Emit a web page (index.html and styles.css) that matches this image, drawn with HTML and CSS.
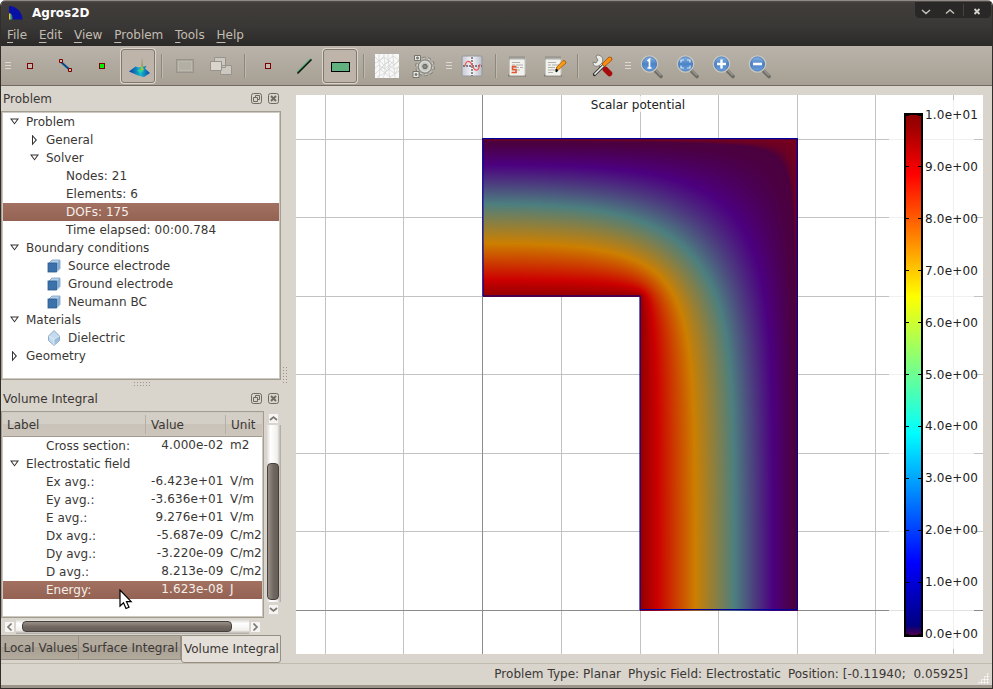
FILE: index.html
```html
<!DOCTYPE html>
<html lang="en">
<head>
<meta charset="utf-8">
<title>Agros2D</title>
<link rel="stylesheet" href="styles.css">
</head>
<body>
<svg class="defs" aria-hidden="true">
  <defs>
    <linearGradient id="lens" x1="0" y1="0" x2="0" y2="1"><stop offset="0" stop-color="#8fb8e4"/><stop offset=".5" stop-color="#4c83c6"/><stop offset="1" stop-color="#6fa3dc"/></linearGradient>
    <linearGradient id="surf" x1="0" y1="0" x2="1" y2="0"><stop offset="0" stop-color="#0a3aa8"/><stop offset=".55" stop-color="#14b8c8"/><stop offset="1" stop-color="#0848b0"/></linearGradient>
    <linearGradient id="sheet" x1="0" y1="0" x2="1" y2="0"><stop offset="0" stop-color="#c6c8d4"/><stop offset=".5" stop-color="#f4f4f8"/><stop offset="1" stop-color="#b9bcca"/></linearGradient>
    <linearGradient id="jet" x1="0" y1="0" x2="0" y2="1"><stop offset="0" stop-color="#900000"/><stop offset=".02" stop-color="#9b0000"/><stop offset=".115" stop-color="#ff0000"/><stop offset=".35" stop-color="#ffff00"/><stop offset=".61" stop-color="#00ffff"/><stop offset=".86" stop-color="#0000ff"/><stop offset=".98" stop-color="#000080"/><stop offset="1" stop-color="#550044"/></linearGradient>
    <g id="zoomlens">
      <path d="M21 22.500l6 6" stroke="#6d6b66" stroke-width="3.600" stroke-linecap="round"/>
      <path d="M22 22.500l5 5" stroke="#9b9993" stroke-width="1.200"/>
      <circle cx="15.500" cy="16" r="8" fill="url(#lens)" stroke="#c9c9c2" stroke-width="1.600"/>
      <circle cx="15.500" cy="16" r="7.100" fill="none" stroke="#3f74b4" stroke-width=".7"/>
    </g>
    <g id="cube"><path d="M1.500 4.500L5 1h8v8.500L9.500 13z" fill="#b5cfe8" stroke="#6e93bb" stroke-width=".7"/><path d="M10 4l3-3v8l-3 3z" fill="#86aed3"/><rect x="1" y="4" width="8.500" height="9" fill="#3d71ab" stroke="#2b5b90" stroke-width=".8"/></g>
    <g id="pad"><path d="M8 27.500h18" stroke="#7d7972" stroke-width="2"/><rect x="9.500" y="9.500" width="15.500" height="18" rx=".8" fill="#f1f1ee" stroke="#c5c4be"/><path d="M9.500 10h15.500" stroke="#6e6d68" stroke-width="3" stroke-dasharray="1 1"/><path d="M12 14.500h8M12 17h3m1 0h7M12 19.500h7m1 0h3M12 22h8M12 24.500h5" stroke="#b1b0ab"/></g>
  </defs>
</svg>
<div class="window">
  <header class="titlebar">
    <svg class="logo" width="16" height="16" viewBox="0 0 16 16"><path d="M1 1a14 14 0 0 1 13.500 13.500H5A6 6 0 0 0 1 8z" fill="#0711a5"/><path d="M1 7.500a7 7 0 0 1 3 7H1z" fill="#18489c"/><path d="M1 8.500h1.500v6H1z" fill="#f5c61c"/><path d="M2.500 9.500h1v5h-1z" fill="#37b8b0"/></svg>
    <h1>Agros2D</h1>
    <svg class="wmbuttons" width="76" height="18" viewBox="0 0 76 18"><path d="M0 0h76v11q0 5-5 5H5q-5 0-5-5z" fill="#2a2826"/><path d="M48.500 2v12" stroke="#474440"/><path d="M7 8l4 3.500L15 8M31 11.500L35 8l4 3.500" fill="none" stroke="#c4c0b8" stroke-width="1.500"/><path d="M59.500 7l5 5m0-5l-5 5" stroke="#d4d0c8" stroke-width="1.900"/></svg>
  </header>
  <nav class="menubar"><span><u>F</u>ile</span><span><u>E</u>dit</span><span><u>V</u>iew</span><span><u>P</u>roblem</span><span><u>T</u>ools</span><span><u>H</u>elp</span></nav>
  <div class="toolbar">
    <i class="grip first"></i>
    <svg class="tool" viewBox="0 0 36 36"><rect x="15.500" y="15.500" width="5" height="5" fill="#c9b8b0" stroke="#7d0000"/></svg>
    <svg class="tool" viewBox="0 0 36 36"><path d="M13 14l9 8" stroke="#004a8c" stroke-width="2"/><path d="M11.500 11.500h3v3h-3zM20.500 20.500h3v3h-3z" fill="#c9b8b0" stroke="#7d0000"/></svg>
    <svg class="tool" viewBox="0 0 36 36"><rect x="15.500" y="15.500" width="5" height="5" fill="#00f000" stroke="#7d0000"/></svg>
    <span class="tool pressed"><svg width="34" height="34" viewBox="0 0 34 34"><path d="M8 22.500l6.500-5 3 1 8-1.500-1.500 2.500 5 4.500-6 4-6-1.500z" fill="url(#surf)"/><path d="M16 21l4-1 3 2-4 2z" fill="#30cf9c"/><path d="M20.500 20l.5-12 .8 12z" fill="#8b7a30"/><path d="M19 21l2-5 2 5z" fill="#a6c03c"/></svg></span>
    <i class="sep"></i>
    <svg class="tool" viewBox="0 0 36 36"><rect x="9.500" y="11.500" width="17" height="13" fill="#aba69b" stroke="#98948d"/><rect x="11.500" y="13.500" width="13" height="9" fill="#b4afa5" stroke="#bdb9b2"/></svg>
    <svg class="tool" viewBox="0 0 36 36"><g fill="#cdc8bf" stroke="#97938d"><path d="M11.500 9.500h11v10h-11zM17.500 17.500h11v9h-11z"/><path d="M7.500 13.500h11v9h-11z" fill="#d9d5cc"/></g></svg>
    <i class="sep"></i>
    <svg class="tool" viewBox="0 0 36 36"><rect x="15.500" y="15.500" width="5" height="5" fill="#c9b8b0" stroke="#7d0000"/></svg>
    <svg class="tool" viewBox="0 0 36 36"><path d="M11.500 24.500L25 11" stroke="#4aa873" stroke-width="2"/><path d="M11.500 25.500L25.500 11.500" stroke="#091008" stroke-width="1.500"/></svg>
    <span class="tool pressed"><svg width="34" height="34" viewBox="0 0 34 34"><rect x="8.500" y="13.500" width="18" height="9" fill="#60b080" stroke="#000"/></svg></span>
    <i class="sep"></i>
    <svg class="tool" viewBox="0 0 36 36"><rect x="6" y="6" width="24" height="24" fill="#f8f8f8"/><path d="M6 9l4 4 5-4 4 3 5-4 6 4M6 15l5-2 4 4 6-4 4 4 5-4M6 20l4-3 6 4 4-4 5 4 5-2M6 26l5-5 5 4 4-4 6 5 4-3M10 6v7l1 8-1 9M15 6v3l1 8v8l-2 5M19 6v6l1 5v8l1 5M24 6v3l1 7v5l1 9M10 13l5-4M11 21l5-5 5-4M11 22l5-4M16 25l5-8 4-5M20 21l5-4 5-5M26 26l4-8M8 29l8-4 5 4 5-3" fill="none" stroke="#d4d4d4" stroke-width=".8"/></svg>
    <svg class="tool" viewBox="0 0 36 36"><g fill="none" stroke="#75756f"><circle cx="20" cy="18.500" r="8.200" stroke-width="3.200" stroke-dasharray="2.900 2.250"/><circle cx="20" cy="18.500" r="8" stroke="#c9c9c5" stroke-width="1.800" stroke-dasharray="2.700 2.320"/><circle cx="20" cy="18.500" r="6.500" fill="#c2c2be" stroke-width=".7"/><circle cx="20" cy="18.500" r="5" stroke="#d9d9d5" stroke-width="1.500"/><circle cx="20" cy="18.500" r="2.200" fill="#898984" stroke="#666661"/><path d="M9.500 7.500h6v5h-6zM8 23.500h6v6H8z" fill="#e8e8e3"/><circle cx="12.500" cy="10" r="1" fill="#777"/><circle cx="11" cy="26.500" r="1" fill="#777"/></g></svg>
    <i class="grip"></i>
    <svg class="tool" viewBox="0 0 36 36"><rect x="8" y="8" width="20" height="20" rx="1" fill="url(#sheet)" stroke="#97969a"/><path d="M9 18h19M18 9v19" stroke="#5f5e63" stroke-width="1.400" stroke-dasharray="2 1"/><path d="M11 18c1-6 5-6 7-1s6 9 8-1" fill="none" stroke="#ee5656" stroke-width="1.200"/></svg>
    <i class="sep tight"></i>
    <svg class="tool" viewBox="0 0 36 36"><use href="#pad"/><path d="M16.500 18.500h-4v3h3.500v3h-4.500" fill="none" stroke="#e5562f" stroke-width="1.600"/></svg>
    <svg class="tool" viewBox="0 0 36 36"><use href="#pad"/><path d="M22.300 22l-2.300-2 7-7.500q3 0 3 2.500z" fill="#f79c18" stroke="#a75400" stroke-width=".8"/><path d="M20 24l2-1.500-2-1.500z" fill="#111" stroke="#111"/></svg>
    <i class="sep wide"></i>
    <svg class="tool" viewBox="0 0 36 36"><path d="M16 16.500l5 5" stroke="#66645f" stroke-width="4"/><path d="M15 15l6 6" stroke="#e4e4e0" stroke-width="2.500"/><path d="M21.500 21.500l4 4" stroke="#a80d0d" stroke-width="5.500" stroke-linecap="round"/><path d="M12 9l2 3-2 3-3-1c0 5 4 5 7 3l2-2c2-4 0-8-5-8z" fill="#ecece8" stroke="#70706b" stroke-width=".8"/><path d="M10.500 26.500L20 17" stroke="#333" stroke-width="3.200" stroke-linecap="round"/><path d="M10.500 26.500L20 17" stroke="#f4f4f4" stroke-width="1.600"/><path d="M18 16l7-7q3.500-.5 3 3l-7.500 6.500z" fill="#f58f13" stroke="#a54b00" stroke-width=".8"/></svg>
    <i class="grip late"></i>
    <svg class="tool" viewBox="0 0 36 36"><use href="#zoomlens"/><path d="M13.500 13l2-1.500V20m-2 0h4" fill="none" stroke="#fff" stroke-width="1.700"/></svg>
    <svg class="tool" viewBox="0 0 36 36"><use href="#zoomlens"/><path d="M11 14.500V12h3m3 0h3v2.500m0 3V20h-3m-3 0h-3v-2.500" fill="none" stroke="#d5e4f4" stroke-width="1.200"/></svg>
    <svg class="tool" viewBox="0 0 36 36"><use href="#zoomlens"/><path d="M11 16h9M15.500 11.500v9" stroke="#fff" stroke-width="2.400"/></svg>
    <svg class="tool" viewBox="0 0 36 36"><use href="#zoomlens"/><path d="M11 16h9" stroke="#fff" stroke-width="2.600"/></svg>
  </div>
  <main class="workspace">
    <aside class="docks">
      <div class="dock-title"><span>Problem</span><svg width="30" height="12" viewBox="0 0 30 12"><g fill="none" stroke="#6f6a63"><rect x=".5" y=".5" width="10" height="10" rx="2"/><path d="M4.500 4.500v-2h4v4h-2M2.500 4.500h4v4h-4z"/><rect x="17.500" y=".5" width="10" height="10" rx="2"/><path d="M20 3l5 5m0-5l-5 5" stroke-width="1.900"/></g></svg></div>
      <div class="tree">
        <div class="row d0"><i class="open"></i>Problem</div>
        <div class="row d1"><i class="closed"></i>General</div>
        <div class="row d1"><i class="open"></i>Solver</div>
        <div class="row d2">Nodes: 21</div>
        <div class="row d2">Elements: 6</div>
        <div class="row d2 selected">DOFs: 175</div>
        <div class="row d2">Time elapsed: 00:00.784</div>
        <div class="row d0"><i class="open"></i>Boundary conditions</div>
        <div class="row item"><svg width="14" height="14"><use href="#cube"/></svg>Source electrode</div>
        <div class="row item"><svg width="14" height="14"><use href="#cube"/></svg>Ground electrode</div>
        <div class="row item"><svg width="14" height="14"><use href="#cube"/></svg>Neumann BC</div>
        <div class="row d0"><i class="open"></i>Materials</div>
        <div class="row item"><svg width="14" height="16" viewBox="0 0 14 16"><path d="M7 .5L12.500 6v4.500L7 15.500 1.500 10.500V6z" fill="#c4dbef" stroke="#7999b8" stroke-width=".8"/><path d="M7 9v6l5-4.500V6z" fill="#9dbedd"/><path d="M1.500 6L7 9l5.500-3M7 9v6" fill="none" stroke="#e6f1fa" stroke-width=".8"/></svg>Dielectric</div>
        <div class="row d0"><i class="closed"></i>Geometry</div>
      </div>
      <div class="splitter"><i class="dots"></i></div>
      <div class="dock-title second"><span>Volume Integral</span><svg width="30" height="12" viewBox="0 0 30 12"><g fill="none" stroke="#6f6a63"><rect x=".5" y=".5" width="10" height="10" rx="2"/><path d="M4.500 4.500v-2h4v4h-2M2.500 4.500h4v4h-4z"/><rect x="17.500" y=".5" width="10" height="10" rx="2"/><path d="M20 3l5 5m0-5l-5 5" stroke-width="1.900"/></g></svg></div>
      <div class="table-area">
        <div class="table">
          <div class="thead"><span>Label</span><span>Value</span><span>Unit</span></div>
          <div class="trow"><span>Cross section:</span><b>4.000e-02</b><b>m2</b></div>
          <div class="trow group"><span><i class="open"></i>Electrostatic field</span></div>
          <div class="trow"><span>Ex avg.:</span><b>-6.423e+01</b><b>V/m</b></div>
          <div class="trow"><span>Ey avg.:</span><b>-3.636e+01</b><b>V/m</b></div>
          <div class="trow"><span>E avg.:</span><b>9.276e+01</b><b>V/m</b></div>
          <div class="trow"><span>Dx avg.:</span><b>-5.687e-09</b><b>C/m2</b></div>
          <div class="trow"><span>Dy avg.:</span><b>-3.220e-09</b><b>C/m2</b></div>
          <div class="trow"><span>D avg.:</span><b>8.213e-09</b><b>C/m2</b></div>
          <div class="trow selected"><span>Energy:</span><b>1.623e-08</b><b>J</b></div>
        </div>
        <div class="vscroll"><svg width="9" height="11" viewBox="0 0 9 11"><path fill="#f6f5f3" d="M0 1h9v9H0z"/><path d="M1 7l3.500-3L8 7" fill="none" stroke="#7b7771" stroke-width="1.700"/></svg><div class="vtrack"><div class="vthumb"></div></div><svg width="9" height="11" viewBox="0 0 9 11"><path fill="#f6f5f3" d="M0 1h9v9H0z"/><path d="M1 4l3.500 3L8 4" fill="none" stroke="#7b7771" stroke-width="1.700"/></svg></div>
      </div>
      <div class="hscroll"><svg width="9" height="10" viewBox="0 0 9 10"><path fill="#f6f5f3" d="M0 0h9v10H0z"/><path d="M6.500 1.500L3 5l3.500 3.500" fill="none" stroke="#7b7771" stroke-width="1.700"/></svg><div class="htrack"><div class="hthumb"></div></div><svg width="9" height="10" viewBox="0 0 9 10"><path fill="#f6f5f3" d="M0 0h9v10H0z"/><path d="M2.500 1.500L6 5 2.500 8.500" fill="none" stroke="#7b7771" stroke-width="1.700"/></svg></div>
      <div class="tabs"><span>Local Values</span><span>Surface Integral</span><span class="active">Volume Integral</span></div>
      <svg class="cursor" width="14" height="21" viewBox="0 0 14 21"><path d="M1 1v16l3.500-3.300L7 19.500l3-1.300-2.500-5.500h4.700z" fill="#fff" stroke="#000" stroke-width="1.200"/></svg>
    </aside>
    <div class="gutter"><i class="vdots"></i></div>
    <section class="plot">
      <svg width="687" height="559" viewBox="296 95 687 559">
        <g shape-rendering="crispEdges" stroke="#c3c3c3">
          <path d="M325.500 95v559M403.500 95v559M561.500 95v559M640.500 95v559M718.500 95v559M797.500 95v559M875.500 95v559M953.500 95v559M296 139.500h687M296 217.500h687M296 296.500h687M296 374.500h687M296 453.500h687M296 531.500h687"/>
          <path d="M482.500 95v559M296 610.500h687" stroke="#8c8c8c"/>
        </g>
        <rect x="589" y="96" width="98" height="16" fill="#fff" fill-opacity=".75"/>
        <rect x="889" y="100" width="85" height="549" fill="#fff" fill-opacity=".75"/>
        <text class="plot-title" x="638" y="109" text-anchor="middle">Scalar potential</text>
        <rect x="905" y="114" width="17" height="522" fill="url(#jet)" stroke="#000" stroke-width="2"/>
        <g id="scale"></g>
      </svg>
      <canvas id="field" width="315" height="472"></canvas>
      <svg class="outline" width="687" height="559" viewBox="296 95 687 559"><path d="M482.700 138.700H797.300V609.700H640V296H483z" fill="none" stroke="#00009c" stroke-width="1.200"/></svg>
    </section>
  </main>
  <footer class="status"><span>Problem Type: Planar</span><span>Physic Field: Electrostatic</span><span class="pos">Position: [-0.11940;&nbsp; 0.05925]</span><i class="resize"></i></footer>
</div>
<script src="field.js"></script>
</body>
</html>
```
FILE: styles.css
```css
* { box-sizing: border-box; }
body { margin: 0; background: #fff; font: 12px/18px "DejaVu Sans", sans-serif; color: #3a3735; }
.defs { position: absolute; width: 0; height: 0; }
i { display: block; font-style: normal; }
.window { width: 993px; height: 689px; display: flex; flex-direction: column; border: solid #302d2b; border-width: 0 1px 1px; border-radius: 6px 6px 0 0; background: #d9d4cc; overflow: hidden; }
.titlebar { height: 26px; flex: none; display: flex; align-items: center; padding: 0 1px 0 6px; background: linear-gradient(#55504c, #403d3a 2px, #3a3836); border-top: 1px solid #8f8a86; }
.logo { margin: -2px 8px 0 1px; }
h1 { margin: -1px 0 0; font-size: 12px; line-height: 18px; color: #fff; flex: 1; }
.wmbuttons { margin-top: -6px; margin-right: 0; }
.menubar { height: 20px; flex: none; display: flex; gap: 11.8px; padding-left: 6px; background: linear-gradient(#3a3836, #2c2a28); color: #c1bcb2; font-size: 12px; line-height: 18px; }
.menubar u { text-underline-offset: 3px; }
.toolbar { height: 40px; flex: none; display: flex; align-items: center; background: linear-gradient(#b9b3a9, #a79f94); border-bottom: 1px solid #716b63; }
.tool { width: 36px; height: 36px; flex: none; display: block; }
.pressed { position: relative; width: 34px; height: 34px; margin: 0 1px; border: 1px solid #81786f; border-radius: 3px; background: #beb4aa; box-shadow: 0 0 0 1px #dcd5cb; }
.pressed svg { display: block; margin: -1px; }
.grip { width: 6px; height: 7px; margin: 0 2px 0 5px; background: repeating-linear-gradient(#ddd9d2 0 1px, transparent 1px 3px); }
.grip.first { margin: 0 1px 0 4px; }
.grip.late { margin: 0 3px 0 5px; }
.sep { width: 11px; height: 24px; background: linear-gradient(90deg, transparent 5px, #8e877e 5px 6px, #bfb9af 6px 7px, transparent 7px); }
.sep.tight { width: 10px; }
.sep.wide { width: 12px; }
.workspace { height: 577px; flex: none; display: flex; }
.docks { position: relative; width: 281px; display: flex; flex-direction: column; }
.dock-title { height: 25px; display: flex; align-items: center; justify-content: space-between; padding: 0 1.500px 0 2px; flex: none; }
.tree { height: 269px; width: 280px; flex: none; background: #fff; border: 1px solid #a39c91; box-shadow: inset 0 0 0 1px #cfcac1; padding: 1px; }
.row { height: 18px; display: flex; align-items: center; white-space: pre; }
.d0 { padding-left: 6px; }
.d1 { padding-left: 26px; }
.d2 { padding-left: 63px; letter-spacing: .04px; }
.item { padding-left: 44px; letter-spacing: .05px; }
.item svg { margin-right: 7px; }
.open, .closed { width: 17px; height: 9px; flex: none; background: #333; clip-path: polygon(evenodd, 1px 1px, 10px 1px, 5.500px 7px, 1px 1px, 3px 2px, 5.500px 5.500px, 8px 2px, 3px 2px); }
.closed { height: 11px; clip-path: polygon(evenodd, 3px 0, 8px 5.500px, 3px 11px, 3px 0, 4px 2.500px, 4px 8.500px, 6.500px 5.500px, 4px 2.500px); }
.selected { color: #f5efea; background: linear-gradient(#a27161, #936252); }
.splitter { height: 7px; flex: none; padding-top: 1px; }
.dots { width: 18px; height: 6px; margin: 0 0 0 132px; background: radial-gradient(circle, #9a948a 35%, transparent 40%) 0 0 / 3px 3px; }
.dock-title.second { height: 24px; }
.table-area { height: 207px; flex: none; display: flex; }
.table { width: 263px; height: 207px; background: #fff; border: 1px solid #a39c91; box-shadow: inset 0 0 0 1px #cfcac1; padding: 1px; overflow: hidden; }
.thead { height: 24px; display: grid; grid-template-columns: 143px 80px 1fr; border-bottom: 1px solid #a49a8f; background: linear-gradient(#d4cfc6 50%, #c9c3b9 50%, #cbc5bb); }
.thead span { padding: 1px 0 0 5px; border-right: 1px solid #b6afa5; margin: 2px 0 3px; line-height: 18px; }
.thead span:first-child { padding-left: 4px; }
.thead span:last-child { border: 0; }
.trow { height: 18px; display: grid; grid-template-columns: 143px 78px 1fr; white-space: nowrap; }
.trow span { padding-left: 43px; }
.trow b { font-weight: normal; line-height: 16px; text-align: right; letter-spacing: .1px; padding-right: .5px; }
.trow b:last-child { padding-left: 6px; text-align: left; letter-spacing: 0; }
.trow.group span { padding-left: 6px; display: flex; align-items: center; }
.vscroll { width: 18px; display: flex; flex-direction: column; align-items: center; padding-top: 2px; }
.vtrack { width: 15px; height: 177px; margin: 1px 0 2px; padding-top: 38px; background: linear-gradient(90deg, #d5d1ca, #fff 30%, #f2f0ed 75%, #aaa59e); }
.vthumb { width: 12px; height: 137px; margin-left: 1px; border: 1px solid #46403c; border-radius: 4px; background: linear-gradient(90deg, #999088, #706761 55%, #665d57); }
.hscroll { height: 17px; flex: none; display: flex; align-items: center; padding-left: 4px; gap: 2px; }
.htrack { width: 233px; height: 15px; padding: 2px 0 0 6px; background: linear-gradient(#d5d1ca, #fff 30%, #f2f0ed 75%, #aaa59e); }
.hthumb { width: 210px; height: 11px; border: 1px solid #46403c; border-radius: 4px; background: linear-gradient(#999088, #706761 55%, #665d57); }
.tabs { display: flex; height: 28px; align-items: flex-start; white-space: nowrap; }
.tabs span { width: 78px; height: 25px; padding: 3px 0 0 2.500px; border: 1px solid #968f84; border-left: 0; background: linear-gradient(#b4ab9f 50%, #a9a094 50%, #b3aa9e); }
.tabs span:nth-child(2) { width: 102px; padding-left: 3px; }
.tabs .active { width: 100px; height: 28px; padding: 4px 0 0 2px; border-left: 1px solid #968f84; border-radius: 0 0 3px 3px; background: #e4e0d9; }
.cursor { position: absolute; left: 118px; top: 503px; }
.gutter { width: 14px; padding-top: 280px; }
.vdots { width: 6px; height: 18px; margin-left: 0; background: radial-gradient(circle, #9a948a 35%, transparent 40%) 0 0 / 3px 3px; }
.plot { position: relative; width: 687px; height: 559px; margin-top: 9px; background: #fff; }
.plot svg { display: block; }
#field { position: absolute; left: 187px; top: 44px; }
.plot .outline { position: absolute; left: 0; top: 0; }
.plot text { fill: #222; font-size: 12px; }
.status { position: relative; height: 25px; flex: none; display: flex; justify-content: flex-end; gap: 7px; padding: 1px 24px 0 0; border-top: 1px solid #c2bbb0; border-bottom: 3px solid #9b958a; line-height: 18px; white-space: pre; letter-spacing: .03px; }
.resize { position: absolute; right: 3px; bottom: 1px; width: 12px; height: 12px; clip-path: polygon(100% 0, 100% 100%, 0 100%); background: radial-gradient(circle, #fff 45%, transparent 50%) 0 0 / 3px 3px; }
```
FILE: field.js
```js
// Laplace problem on the L-shaped domain: 10 V on the inner edge, 0 V on the outer.
(function () {
  var n = 52, W = 2 * n, H = 3 * n, S = W + 1;
  var u = new Float64Array(S * (H + 1));
  var x, y, k, i;
  for (y = 0; y <= H; y++) for (x = 0; x <= W; x++) {
    if (x <= n && y >= n) u[y * S + x] = 1;
    else u[y * S + x] = Math.min(1, Math.max(0, Math.min(y, W - x) / n));
  }
  for (k = 0; k < 500; k++) {
    for (y = 1; y <= H; y++) for (x = 0; x < W; x++) {
      if (x <= n && y >= n) continue;
      i = y * S + x;
      var l = x === 0 ? u[i + 1] : u[i - 1];
      var d = y === H ? u[i - S] : u[i + S];
      u[i] += 1.93 * ((l + u[i + 1] + u[i - S] + d) / 4 - u[i]);
    }
  }
  var stops = [[0, 118, 0, 30], [0.005, 106, 0, 36], [0.012, 75, 0, 62], [0.03, 75, 0, 66],
    [0.155, 76, 0, 127], [0.4, 76, 127, 127], [0.65, 204, 127, 0], [0.89, 204, 0, 0], [0.985, 153, 0, 0], [1, 150, 0, 0]];
  function color(v) {
    var j = 1;
    while (j < stops.length - 1 && v > stops[j][0]) j++;
    var a = stops[j - 1], b = stops[j], t = Math.min(1, Math.max(0, (v - a[0]) / (b[0] - a[0])));
    return [a[1] + (b[1] - a[1]) * t, a[2] + (b[2] - a[2]) * t, a[3] + (b[3] - a[3]) * t];
  }
  var ctx = document.getElementById('field').getContext('2d');
  var img = ctx.createImageData(315, 472);
  for (y = 0; y < 472; y++) for (x = 0; x < 315; x++) {
    if (x < 157 && y >= 158) continue;
    var gx = x / 314 * W, gy = y / 471 * H;
    var ix = Math.min(W - 1, Math.floor(gx)), iy = Math.min(H - 1, Math.floor(gy));
    var fx = gx - ix, fy = gy - iy;
    i = iy * S + ix;
    var c = color((u[i] * (1 - fx) + u[i + 1] * fx) * (1 - fy) + (u[i + S] * (1 - fx) + u[i + S + 1] * fx) * fy);
    k = (y * 315 + x) * 4;
    img.data[k] = c[0]; img.data[k + 1] = c[1]; img.data[k + 2] = c[2]; img.data[k + 3] = 255;
  }
  ctx.putImageData(img, 0, 0);

  // Labels and tick marks of the colour scale.
  var out = '';
  for (k = 0; k <= 10; k++) {
    var ty = 114.5 + k * 51.9;
    out += '<text x="925" y="' + (ty + 4.5) + '" textLength="53">' + (k === 0 ? '1.0e+01' : (10 - k) + '.0e+00') + '</text>';
    out += '<path d="M906 ' + Math.round(ty) + '.5h3m9 0h3" stroke="#000"/>';
  }
  document.getElementById('scale').innerHTML = out;
})();
```
